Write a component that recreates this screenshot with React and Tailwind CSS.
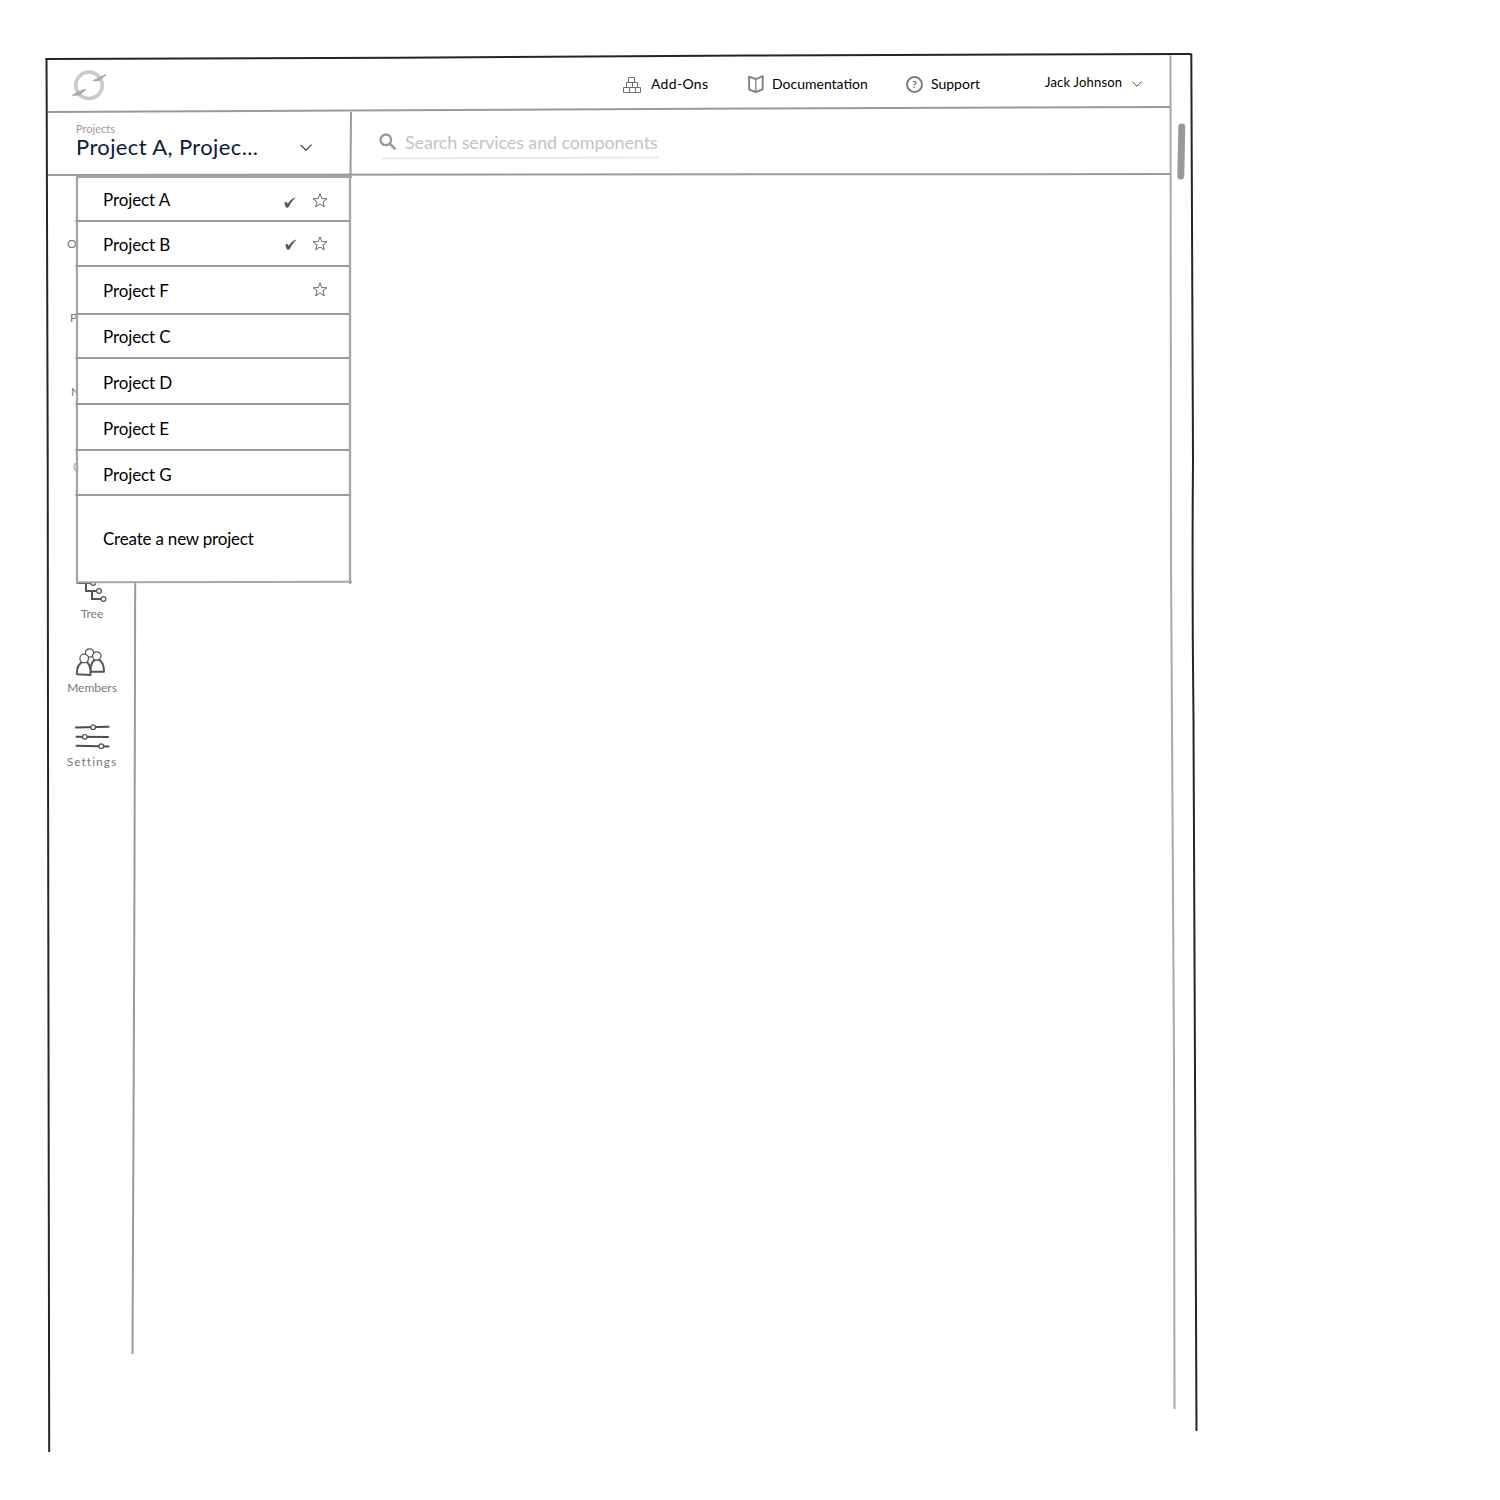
const Stroke = ({ className, d, color = '#999', width = 2, cap = 'butt' }) => (
  <svg className={'block shrink-0 overflow-visible ' + className} fill="none" stroke={color} strokeWidth={width} strokeLinecap={cap} strokeLinejoin="round">
    <path d={d} />
  </svg>
);

const Chevron = ({ className }) => (
  <svg className={'block shrink-0 overflow-visible ' + className} viewBox="0 0 12 7" fill="none" stroke="#333" strokeWidth="1.1">
    <path d="M.4.8 6 6.2 11.6.6" />
  </svg>
);

const Logo = () => (
  <svg className="mt-[2px] block h-[34px] w-[36px] shrink-0 overflow-visible" viewBox="0 0 36 34" fill="none">
    <circle cx="17" cy="17.300" r="13.200" stroke="#cbcbcb" strokeWidth="3.700" />
    <path d="M20.500 13 33.800 6.800 26.500 12.900M33.800 6.800 27.500 9.500 23.500 13.300Z" fill="#aaa" stroke="#aaa" strokeWidth="1.200" />
    <path d="M.5 27.500 13.500 21.500 6.500 27.500M.5 27.500 7 23.500 13.200 21.300 8 26Z" fill="#aaa" stroke="#aaa" strokeWidth="1.200" />
  </svg>
);

const Blocks = () => (
  <svg className="mt-[2px] block h-[17px] w-[18px] shrink-0" viewBox="0 0 18 17" fill="none" stroke="#707070" strokeWidth="1">
    <path d="M.5 10.5h17v5H.5zM6.5 10.5v5M12.5 10.5v5M3.5 5.5h11v5h-11zM9.5 5.5v5M5.500 .5h6v5h-6z" />
  </svg>
);

const Book = () => (
  <svg className="block h-[18px] w-[16px] shrink-0" viewBox="0 0 16 18" fill="none" stroke="#808080" strokeWidth="1.900" strokeLinejoin="round">
    <path d="M1 1.600 7.800 4.100 14.800 1.100 14.600 14.400 7.800 17 1.200 14.600Z" />
    <path d="M7.800 4.100V17" strokeWidth="1.300" />
  </svg>
);

const Help = () => (
  <span className="flex h-[17px] w-[17px] shrink-0 items-center justify-center rounded-full border-[2.500px] border-[#7d7d7d] font-['Lato',sans-serif] text-[10px] leading-none font-bold text-[#666]">?</span>
);

const Search = () => (
  <svg className="block h-[18px] w-[18px] shrink-0" viewBox="0 0 18 18" fill="none" stroke="#999">
    <circle cx="6.8" cy="6.8" r="5.3" strokeWidth="2.4" />
    <path d="m10.8 10.8 5.8 5.6" strokeWidth="2.6" />
  </svg>
);

const Check = ({ className }) => (
  <svg className={'block h-[11px] w-[12px] shrink-0 ' + className} viewBox="0 0 12 11" fill="#57565c">
    <path d="M.3 5.9C1 4.8 2.5 4.7 3 5.4L3.6 7C5.500 4 8.500 1 11.700.2 9 3 6.500 6.400 4.700 9.900 3.900 10.900 2.200 10.900 1.700 10Z" />
  </svg>
);

const Star = ({ className }) => (
  <svg className={'block h-[15px] w-[16px] shrink-0 ' + className} viewBox="0 0 16 15" fill="none" stroke="#555" strokeWidth="0.9">
    <path d="M8 .9 9.800 5.600 15 5.800 10.900 8.900 12.400 13.900 8 11.100 3.600 13.900 5.100 8.900 1 5.800 6.200 5.600Z" />
  </svg>
);

const Tree = () => (
  <svg className="block h-[30px] w-[34px] shrink-0" viewBox="0 0 34 30" fill="none" stroke="#55545b" strokeWidth="2">
    <path d="M3 10H17M11 10V18H23M17 18V26H28" />
    <g fill="#fff" strokeWidth="1.200">
      <circle cx="18.200" cy="10" r="2.400" />
      <circle cx="24" cy="18" r="2.400" />
      <circle cx="28.500" cy="26" r="2.400" />
    </g>
  </svg>
);

const Members = () => (
  <svg className="mr-[2px] block h-[30px] w-[34px] shrink-0" viewBox="0 0 34 30" fill="#fff" stroke="#55545b" strokeWidth="1.900" strokeLinejoin="round">
    <circle cx="15.500" cy="6" r="4.200" strokeWidth="1.200" />
    <path d="M16.500 24.700H30C30 18.500 28 13.500 23.500 12.100 19 12.500 16.500 17.500 16.500 24.700Z" />
    <circle cx="22.800" cy="9" r="4.200" strokeWidth="1.200" />
    <path d="M3 27.300 16.500 28C17 20.500 15 15.500 11 14 5 15.500 2.500 20.500 3 27.300Z" />
    <circle cx="10.200" cy="11.500" r="4.300" strokeWidth="1.200" />
  </svg>
);

const Settings = () => (
  <svg className="mr-px block h-[30px] w-[36px] shrink-0" viewBox="0 0 36 30" fill="none" stroke="#4d4c55" strokeWidth="2" strokeLinecap="round">
    <path d="M2 6.500 34.500 5.700M2.500 15.800 34 16M2.500 24.700 34.500 25.500" />
    <g fill="#fff" strokeWidth="1.200">
      <circle cx="19.200" cy="6.200" r="2.300" />
      <circle cx="10.800" cy="15.800" r="2.300" />
      <circle cx="27.300" cy="25.200" r="2.300" />
    </g>
  </svg>
);

const rows = [
  { name: 'Project A', h: 'h-[44px]', nudge: '', check: 'mt-[6px] mr-[16px]', star: 'mt-[2px]' },
  { name: 'Project B', h: 'h-[45px]', nudge: 'pt-[1px]', check: 'mr-[15px]', star: 'mb-[2px]' },
  { name: 'Project F', h: 'h-[48px]', nudge: '', star: 'mb-[2px]' },
  { name: 'Project C', h: 'h-[44px]', nudge: 'pt-[1px]' },
  { name: 'Project D', h: 'h-[46px]', nudge: 'pt-[3px]' },
  { name: 'Project E', h: 'h-[46px]', nudge: 'pt-[3px]' },
  { name: 'Project G', h: 'h-[45px]', nudge: 'pt-[3px]' },
];

const Menu = () => (
  <div className="absolute top-0 left-[28px] z-10 flex w-[275px] flex-col bg-white">
    <Stroke className="h-[2px] w-full" d="M0 .500 276 .500" color="#a3a3a3" width={3} />
    <div className="flex">
      <Stroke className="-mr-px h-[406px] w-px" d="M1 -2 1 406" color="#a6a6a6" width={2.300} />
      <div className="flex flex-1 flex-col">
        {rows.map((r) => (
          <div key={r.name} className={'flex flex-col ' + r.h}>
            <div className={'flex flex-1 items-center pr-[23px] pl-[27px] ' + r.nudge}>
              <span className="flex-1 text-[17px] leading-none tracking-[-0.1px] whitespace-nowrap text-black">{r.name}</span>
              {r.check !== undefined && <Check className={r.check} />}
              {r.star !== undefined && <Star className={r.star} />}
            </div>
            <Stroke className="h-[2px] w-full" d="M-.500 1H274" />
          </div>
        ))}
        <div className="flex h-[86px] items-center pb-[2px] pl-[27px]">
          <span className="text-[17px] leading-none tracking-[-0.2px] whitespace-nowrap text-black">Create a new project</span>
        </div>
      </div>
      <Stroke className="-ml-px h-[406px] w-px" d="M0 -2 0 406" color="#a6a6a6" width={2.300} />
    </div>
    <Stroke className="-mt-[3px] h-[2px] w-full" d="M0 1.200 276 .800" color="#a6a6a6" />
  </div>
);

const sideItems = [
  { label: 'O', pad: 'pl-[19px]' },
  { label: 'P', pad: 'pl-[22px]' },
  { label: 'N', pad: 'pl-[23px]' },
  { label: '@', pad: 'pl-[25px]' },
  { label: '', pad: '' },
  { label: 'Tree', icon: Tree, track: '' },
  { label: 'Members', icon: Members, track: '' },
  { label: 'Settings', icon: Settings, track: 'tracking-[1px]' },
];

const NavItem = ({ icon: Icon, label, className }) => (
  <div className={'flex items-center ' + className}>
    <Icon />
    <span className="text-[14px] leading-none whitespace-nowrap text-black">{label}</span>
  </div>
);

export default function App() {
  return (
    <div className="flex h-[1500px] w-[1500px] flex-col overflow-hidden bg-white pt-[52px] pl-[48px] font-['Lato',sans-serif]">
      <Stroke className="h-[8px] w-[1144px]" d="M-2.500 7 350 5.700 700 3.500 1143.500 2" color="#252525" />
      <div className="flex">
        <Stroke className="-mr-px h-[1392px] w-px" d="M-1.500 -1.500C-1 130 0 260-.300 400C-1 540-.500 640 0 680C.800 760 1 900 1.200 1392" color="#252525" />
        <div className="flex w-[1122px] flex-col">
          <header className="flex h-[48px] items-center pl-[24px]">
            <Logo />
            <nav className="flex flex-1 items-center pl-[515px]">
              <NavItem icon={Blocks} label="Add-Ons" className="w-[125px] gap-[10px] tracking-[0.3px]" />
              <NavItem icon={Book} label="Documentation" className="w-[158px] gap-[8px]" />
              <NavItem icon={Help} label="Support" className="w-[139px] gap-[8px]" />
              <span className="mb-[3px] w-[87px] text-[13px] leading-none tracking-[0.2px] whitespace-nowrap text-black">Jack Johnson</span>
              <Chevron className="h-[6px] w-[10px]" />
            </nav>
          </header>
          <Stroke className="h-[4px] w-full" d="M0 4 300 2.500 700 .500 1122 -1" />
          <div className="flex h-[62px]">
            <div className="flex w-[302px] items-center justify-between pr-[38px] pl-[28px]">
              <div className="mb-[5px] flex flex-col gap-[2px]">
                <span className="text-[11px] leading-none text-[#999]">Projects</span>
                <span className="text-[22px] leading-none tracking-[0.38px] whitespace-nowrap text-[#0b1a38]">Project A, Projec...</span>
              </div>
              <Chevron className="mt-[8px] h-[7px] w-[12px]" />
            </div>
            <Stroke className="h-full w-[2px]" d="M1 0 .500 63" />
            <div className="flex flex-col pt-[21px] pl-[27px]">
              <div className="flex items-center gap-[8px]">
                <Search />
                <span className="text-[18px] leading-none tracking-[-0.13px] whitespace-nowrap text-[#c4c4c4]">Search services and components</span>
              </div>
              <Stroke className="mt-[6px] h-[2px] w-[280px]" d="M2 1.500 280 .500" color="#e8e8e8" />
            </div>
          </div>
          <Stroke className="h-[2px] w-full" d="M0 1 1122 0" />
          <div className="relative flex">
            <Menu />
            <aside className="flex w-[86px] flex-col pt-px">
              {sideItems.map(({ label, pad, track, icon: Icon }, i) => (
                <div key={i} className={'flex h-[74px] flex-col justify-end ' + (pad === undefined ? 'items-center pl-[2px]' : pad)}>
                  {Icon && <Icon />}
                  <span className={'mt-[4px] text-[12px] leading-[14px] text-[#777] ' + (track || '')}>{label}</span>
                </div>
              ))}
            </aside>
            <Stroke className="h-[1180px] w-[2px]" d="M1.200 406 .500 700 -.500 950 -1.500 1178" />
          </div>
        </div>
        <Stroke className="h-[1350px] w-[5px]" d="M.500 -4.500C.300 200 .500 400 1 500C2 700 4 850 4 1000L4.500 1349" color="#aaa" />
        <Stroke className="h-[120px] w-[16px]" d="M6.800 67 5.800 116" color="#999" width={7} cap="round" />
        <Stroke className="h-[1372px] w-[5px]" d="M0.300 -6C.500 150 2.300 280 2 400C1 520 1.800 600 2.500 660C3.500 800 4.500 1000 5.500 1371" color="#252525" />
      </div>
    </div>
  );
}
